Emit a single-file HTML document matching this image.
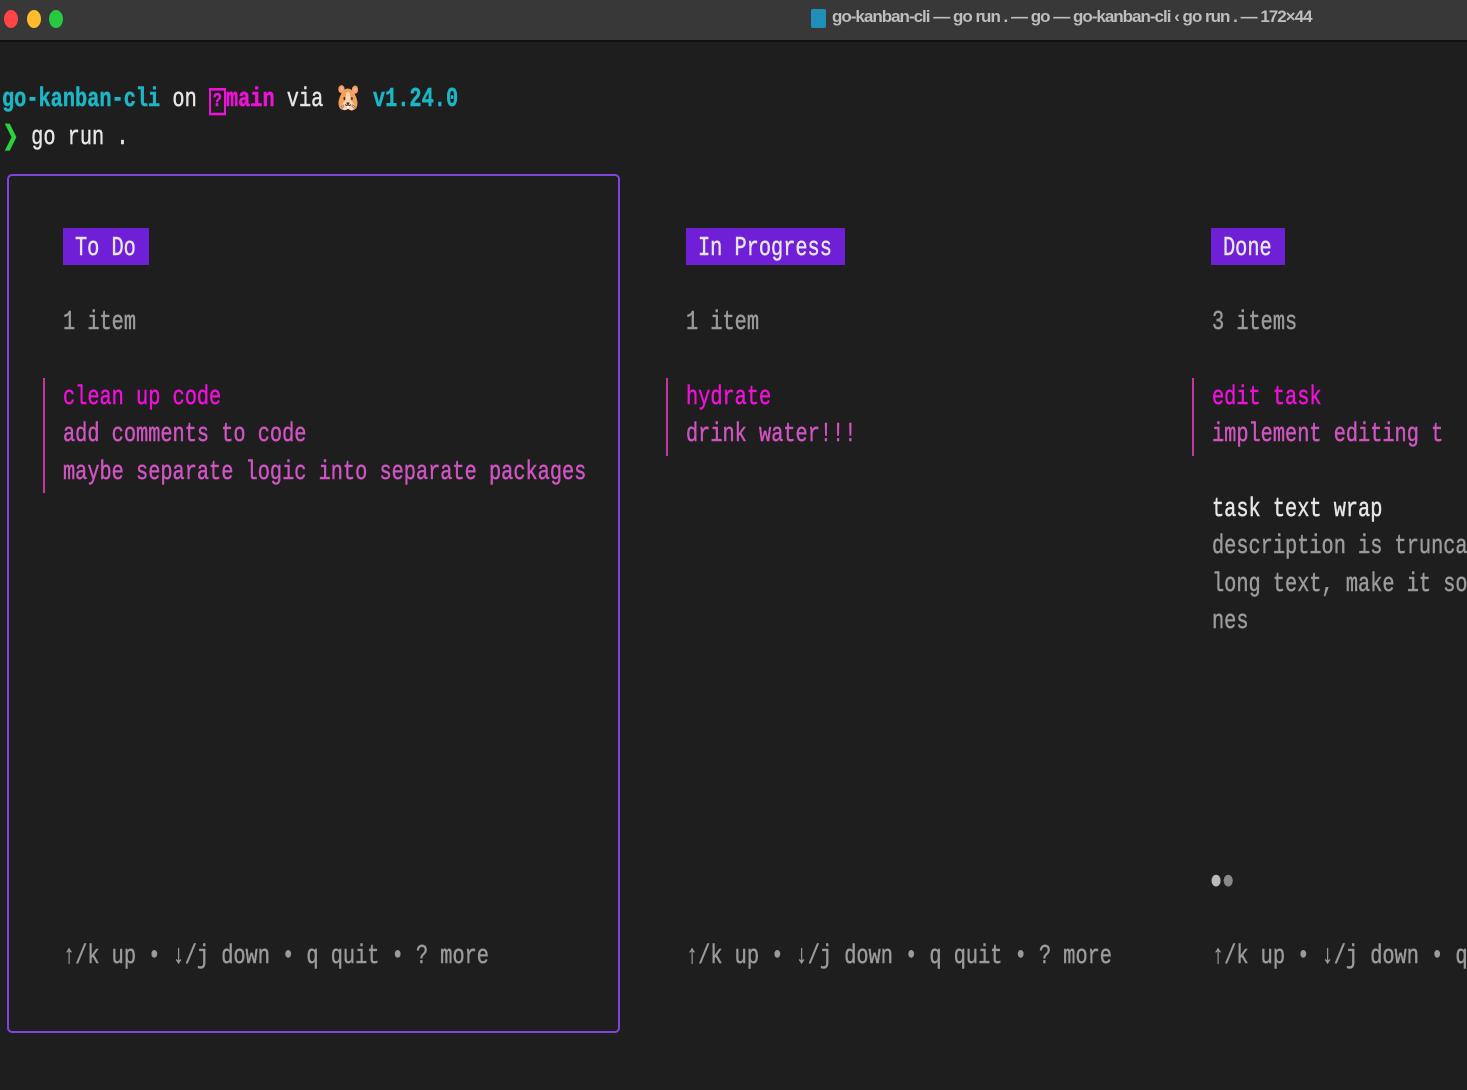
<!DOCTYPE html>
<html><head><meta charset="utf-8"><style>
html,body{margin:0;padding:0;width:1467px;height:1090px;overflow:hidden;background:#1e1e1e;}
.bar{position:absolute;left:0;top:0;width:1467px;height:40px;background:#383838;border-bottom:2px solid #111;}
.dot{position:absolute;top:10px;width:14px;height:18px;border-radius:50%;}
.title{position:absolute;left:832px;top:7px;font:bold 17px "Liberation Sans",sans-serif;color:#bdbdbd;letter-spacing:-1px;white-space:nowrap;}
.l{position:absolute;height:30px;line-height:30px;font-family:"Liberation Mono",monospace;font-size:20.3px;white-space:pre;transform:scaleY(1.3);transform-origin:left center;color:#9b9b9b;-webkit-text-stroke:0.35px currentColor;}
.box{position:absolute;left:7px;top:174px;width:609px;height:855px;border:2px solid #7d45e0;border-radius:5px;}
.vb{position:absolute;width:2px;background:#c2389f;}
.hd{position:absolute;background:#6f1fd6;height:37px;}
.pk{color:#ee11d8}.pk2{color:#cf55c1}.wh{color:#e6e6e6}.cy{color:#1cb6c4}
</style></head><body>
<div class="bar"></div>
<div class="dot" style="left:4px;background:#ff4545"></div>
<div class="dot" style="left:27px;background:#fdbb2d"></div>
<div class="dot" style="left:49px;background:#27c93f"></div>
<div style="position:absolute;left:811px;top:9px;width:15px;height:19px;background:#1f8fb8;border-radius:2px"></div>
<div class="title">go-kanban-cli — go run . — go — go-kanban-cli ‹ go run . — 172×44</div>

<div class="l" style="left:2px;top:86px;font-weight:bold"><span class="cy">go-kanban-cli</span><span class="wh" style="font-weight:normal"> on </span><span class="pk"><span style="border:2px solid #ee11d8;font-size:15px;padding:0 2px">?</span>main</span><span class="wh" style="font-weight:normal"> via </span>🐹 <span class="cy">v1.24.0</span></div>
<div class="l wh" style="left:2px;top:124px"><span style="color:#2bd23a">❯</span> go run .</div>

<div class="box"></div>
<div class="hd" style="left:63px;top:228px;width:86px"></div>
<div class="hd" style="left:686px;top:228px;width:159px"></div>
<div class="hd" style="left:1211px;top:228px;width:74px"></div>
<div class="l wh" style="left:75px;top:235px">To Do</div>
<div class="l wh" style="left:698px;top:235px">In Progress</div>
<div class="l wh" style="left:1223px;top:235px">Done</div>

<div class="l" style="left:63px;top:309px">1 item</div>
<div class="l" style="left:686px;top:309px">1 item</div>
<div class="l" style="left:1212px;top:309px">3 items</div>

<div class="vb" style="left:43px;top:378px;height:115px"></div>
<div class="vb" style="left:666px;top:378px;height:78px"></div>
<div class="vb" style="left:1192px;top:378px;height:78px"></div>

<div class="l pk" style="left:63px;top:384px">clean up code</div>
<div class="l pk2" style="left:63px;top:421px">add comments to code</div>
<div class="l pk2" style="left:63px;top:459px">maybe separate logic into separate packages</div>
<div class="l pk" style="left:686px;top:384px">hydrate</div>
<div class="l pk2" style="left:686px;top:421px">drink water!!!</div>
<div class="l pk" style="left:1212px;top:384px">edit task</div>
<div class="l pk2" style="left:1212px;top:421px">implement editing t</div>
<div class="l wh" style="left:1212px;top:496px">task text wrap</div>
<div class="l" style="left:1212px;top:533px">description is trunca</div>
<div class="l" style="left:1212px;top:571px">long text, make it so</div>
<div class="l" style="left:1212px;top:608px">nes</div>
<div class="l" style="left:1210px;top:868px;color:#bbb">●<span style="color:#888">●</span></div>

<div class="l" style="left:63px;top:943px">↑/k up • ↓/j down • q quit • ? more</div>
<div class="l" style="left:686px;top:943px">↑/k up • ↓/j down • q quit • ? more</div>
<div class="l" style="left:1212px;top:943px">↑/k up • ↓/j down • q</div>
</body></html>
